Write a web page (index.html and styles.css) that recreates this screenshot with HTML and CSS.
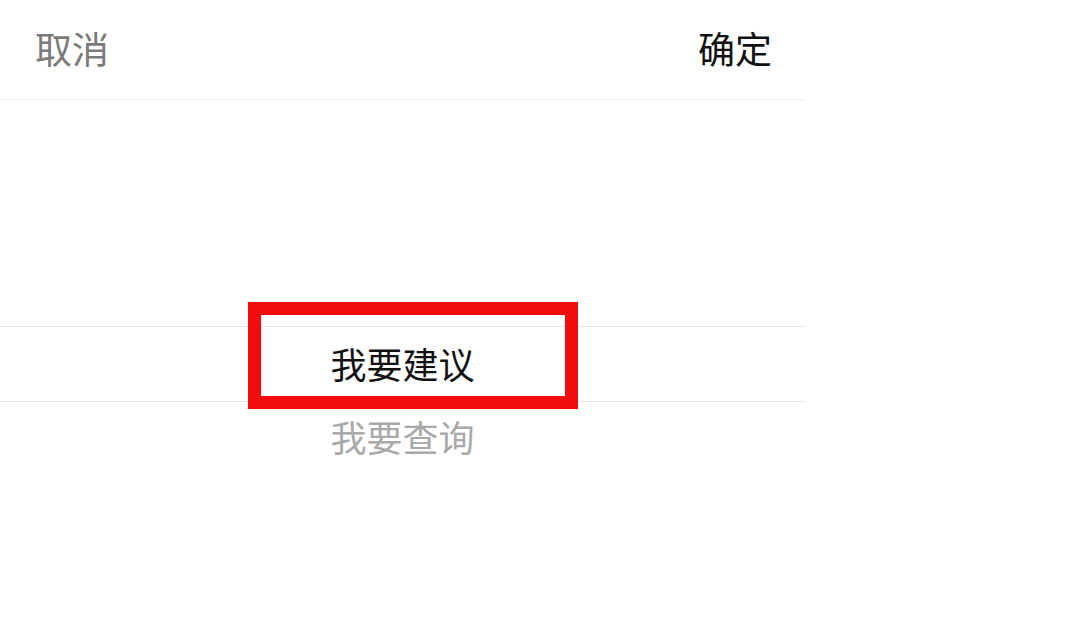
FILE: index.html
```html
<!DOCTYPE html>
<html lang="zh">
<head>
<meta charset="utf-8">
<link rel="stylesheet" href="styles.css">
</head>
<body>
<div class="sheet">
  <div class="toolbar">
    <span class="cancel">取消</span>
    <span class="confirm">确定</span>
  </div>
  <div class="picker">
    <div class="spacer"></div>
    <div class="row selected">
      <span>我要建议</span>
      <div class="highlight"></div>
    </div>
    <div class="row next"><span>我要查询</span></div>
  </div>
</div>
</body>
</html>
```
FILE: styles.css
```css
html, body {
  margin: 0;
  padding: 0;
  background: #ffffff;
}
body {
  width: 1080px;
  height: 627px;
  overflow: hidden;
  font-family: "Noto Sans CJK SC", "Noto Sans", sans-serif;
}
.sheet {
  width: 805px;
}
.toolbar {
  height: 99px;
  border-bottom: 1px solid #efefef;
  display: flex;
  align-items: center;
  justify-content: space-between;
  padding: 0 33px 0 35px;
  box-sizing: content-box;
  font-size: 37px;
  line-height: 1;
}
.toolbar .cancel {
  color: #7a7a7a;
  margin-top: -3px;
}
.toolbar .confirm {
  color: #111111;
  margin-top: -3px;
}
.picker {
  display: flex;
  flex-direction: column;
}
.spacer {
  height: 226px;
}
.row {
  height: 74px;
  display: flex;
  align-items: center;
  justify-content: center;
  font-size: 36px;
  line-height: 1;
  position: relative;
}
.row.selected {
  border-top: 1px solid #e6e6e6;
  border-bottom: 1px solid #e6e6e6;
  color: #111111;
}
.row.selected span {
  margin-top: -2px;
}
.row.next {
  color: #a9a9a9;
  height: 76px;
}
.row.next span {
  margin-top: -8px;
}
.highlight {
  position: absolute;
  left: 248px;
  top: -25px;
  width: 330px;
  height: 107px;
  border: 13px solid #f20d0d;
  box-sizing: border-box;
}
```
